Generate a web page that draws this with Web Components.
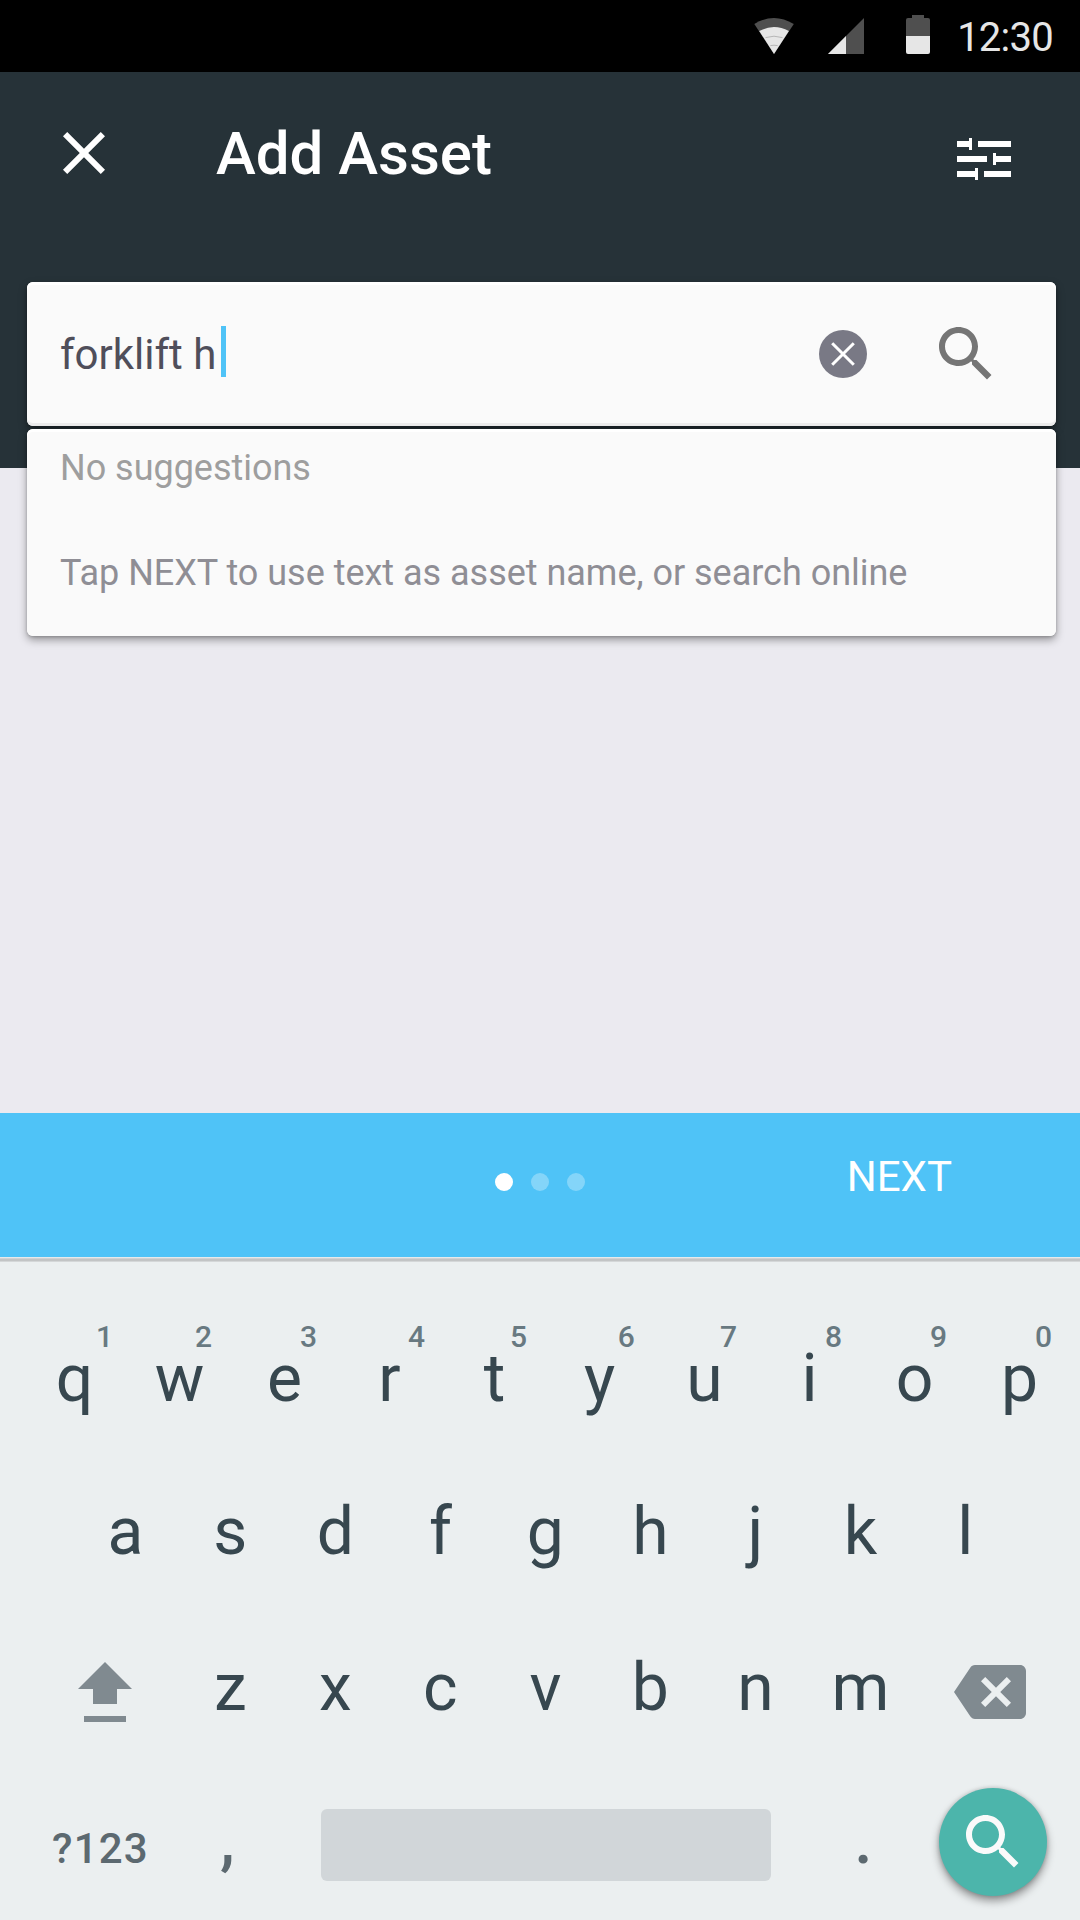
<!DOCTYPE html>
<html lang="en">
<head>
<meta charset="utf-8">
<title>Add Asset</title>
<style>
  html, body { margin: 0; padding: 0; }
  body { width: 1080px; height: 1920px; overflow: hidden; font-family: Roboto, "Noto Sans", sans-serif; background: #ebeaf0; }
</style>
</head>
<body>
<asset-screen></asset-screen>
<script>
const define = (name, markup, setup) => {
  const template = document.createElement('template');
  template.innerHTML = markup;
  customElements.define(name, class extends HTMLElement {
    constructor() {
      super();
      this.attachShadow({ mode: 'open' }).append(template.content.cloneNode(true));
    }
    connectedCallback() {
      if (setup) setup(this, this.shadowRoot);
    }
  });
};

const icons = {
  close: '<path d="M19 6.41L17.59 5 12 10.59 6.41 5 5 6.41 10.59 12 5 17.59 6.41 19 12 13.41 17.59 19 19 17.59 13.41 12z"/>',
  search: '<path d="M15.5 14h-.79l-.28-.27C15.41 12.59 16 11.11 16 9.5 16 5.91 13.09 3 9.5 3S3 5.91 3 9.5 5.91 16 9.5 16c1.61 0 3.09-.59 4.23-1.57l.27.28v.79l5 4.99L20.49 19l-4.99-5zm-6 0C7.01 14 5 11.99 5 9.5S7.01 5 9.5 5 14 7.01 14 9.5 11.99 14 9.5 14z"/>',
  tune: '<path d="M3 6h4v-1h1v4h-1v-1h-4zM10 6h11v2h-11zM3 11h10v2h-10zM15 10h1v1h5v2h-5v1h-1zM3 16h6v-1h1v4h-1v-1h-6zM12 16h9v2h-9z"/>',
  backspace: '<path d="M22 3H7c-.69 0-1.23.35-1.59.88L0 12l5.41 8.11c.36.53.9.89 1.59.89h15c1.1 0 2-.9 2-2V5c0-1.1-.9-2-2-2zm-3 12.59L17.59 17 14 13.41 10.41 17 9 15.59 12.59 12 9 8.41 10.41 7 14 10.59 17.59 7 19 8.41 15.41 12 19 15.59z"/>',
  shift: '<path d="M12 2L3 11h5v5h8v-5h5zM5 20h14v2H5z"/>',
  clear: '<circle cx="12" cy="12" r="8"/><path d="M8.4 8.4l7.2 7.2M15.6 8.4l-7.2 7.2" stroke="#fff" stroke-width="1"/>'
};

define('md-icon', `
  <style>
    :host { display: block; flex: none; width: 72px; height: 72px; }
    svg { display: block; width: 72px; height: 72px; fill: currentColor; }
  </style>
  <svg viewBox="0 0 24 24"></svg>
`, (el, root) => { root.querySelector('svg').innerHTML = icons[el.getAttribute('name')]; });

define('status-bar', `
  <style>
    :host { display: flex; box-sizing: border-box; height: 72px; background: #000; color: #e6e6e6;
      justify-content: flex-end; padding-right: 27px; }
    svg { display: block; flex: none; width: 202px; height: 72px; }
    span { width: 101px; text-align: right; font-size: 40px; letter-spacing: -.75px; line-height: 76px; white-space: nowrap; }
  </style>
  <svg viewBox="750 0 202 72">
    <path d="M754.3 24Q774 12 793.8 24L774 54z" fill="#4f4f4f"/>
    <path d="M759.2 31Q774 23.2 788.9 31L774 54z" fill="#e6e6e6"/>
    <path d="M765.5 37.6Q774 34.8 782.5 37.6M770.3 45.6Q774 44.8 777.7 45.6" fill="none" stroke="#aaa" stroke-width=".8"/>
    <path d="M828 54L864 18v36z" fill="#4f4f4f"/>
    <path d="M828 54L846 36v18z" fill="#e6e6e6"/>
    <path d="M906 36V20q0-2 2-2h4v-3h12v3h4q2 0 2 2v16z" fill="#4f4f4f"/>
    <path d="M906 36h24v16q0 2-2 2h-20q-2 0-2-2z" fill="#e6e6e6"/>
  </svg>
  <span>12:30</span>
`);

define('app-bar', `
  <style>
    :host { display: flex; height: 162px; padding: 0 60px 0 48px; align-items: center; color: #fff; }
    h1 { flex: 1; margin: 1px 0 0 96px; font-size: 60px; font-weight: 500; line-height: 72px; }
    md-icon[name=tune] { margin-top: 12px; }
  </style>
  <md-icon name="close"></md-icon>
  <h1><slot></slot></h1>
  <md-icon name="tune"></md-icon>
`);

define('raised-card', `
  <style>
    :host { display: block; box-sizing: border-box; background: #fafafa; border-radius: 6px;
      box-shadow: 0 4px 8px rgba(0,0,0,.36), 0 1px 3px rgba(0,0,0,.18), inset 0 3px 0 #fff, inset 0 -3px 0 var(--edge, #fafafa); }
  </style>
  <slot></slot>
`);

define('search-field', `
  <style>
    :host { display: flex; height: 144px; align-items: center; padding: 0 54px 0 33px; }
    .query { font-size: 42px; color: #4f4e5a; line-height: 51px; white-space: pre; margin-top: 1px; }
    .caret { width: 5px; height: 51px; background: #4fc3f7; margin: -5px auto 0 5px; }
    md-icon[name=clear] { color: #797985; margin-right: 51px; }
    md-icon[name=search] { color: #757575; }
  </style>
  <span class="query"><slot></slot></span><i class="caret"></i>
  <md-icon name="clear"></md-icon>
  <md-icon name="search"></md-icon>
`);

define('suggestion-list', `
  <style>
    :host { display: flex; flex-direction: column; box-sizing: border-box; height: 207px; padding: 12px 33px;
      font-size: 36px; letter-spacing: -.02px; gap: 51px; color: #8f8e95; line-height: 54px; white-space: nowrap; }
    ::slotted(.empty) { color: #9e9e9e; }
  </style>
  <slot></slot>
`);

define('step-bar', `
  <style>
    :host { display: grid; grid-template-columns: 1fr 90px 1fr; height: 144px; background: #4fc3f7; color: #fff; align-items: center; }
    .dots { grid-column: 2; display: flex; gap: 18px; margin-top: -6px; }
    .dots i { width: 18px; height: 18px; border-radius: 50%; background: rgba(255,255,255,.3); }
    .dots i.on { background: #fff; }
    .next { justify-self: end; margin-right: 128px; font-size: 42px; line-height: 50px; margin-top: -16px; }
  </style>
  <div class="dots"><i class="on"></i><i></i><i></i></div>
  <span class="next"><slot></slot></span>
`);

define('kb-key', `
  <style>
    :host { display: block; position: relative; flex: none; width: 105px; text-align: center; font-size: 66px; line-height: inherit; }
    .hint { position: absolute; top: 20px; left: calc(50% + var(--dx, 24px)); width: 40px; margin-left: -20px;
      font-size: 30px; line-height: 30px; font-weight: 500; color: #687981; }
  </style>
  <slot></slot>
`, (el, root) => {
  if (!el.hasAttribute('hint') || root.querySelector('.hint')) return;
  const s = document.createElement('span');
  s.className = 'hint';
  s.textContent = el.getAttribute('hint');
  s.style.setProperty('--dx', (el.getAttribute('dx') || 24) + 'px');
  root.append(s);
});

define('soft-keyboard', `
  <style>
    :host { display: block; background: #ebeff0; height: 663px; color: #37474f; overflow: hidden; }
    .rule { height: 5px; background: linear-gradient(#e6eaeb 0 1px, #d0d2d3 1px 2px, #c2c4c5 2px 4px, #d4d7d8 4px 5px); margin-bottom: 40px; }
    .row { display: flex; height: 153px; line-height: 153px; }
    .r1 { padding-left: 22px; }
    .r2 { padding-left: 72.9px; }
    .r3 { height: 159px; line-height: 159px; align-items: center; padding-left: 69px; }
    .r3 md-icon { color: #808a90; margin-top: 9px; }
    .r3 md-icon[name=shift] { margin-right: 36.9px; }
    .r3 md-icon[name=backspace] { margin-left: 41.1px; }
    .r4 { color: #5c6970; font-weight: 500; }
    .sym { width: 124px; margin-left: 52px; font-size: 42px; letter-spacing: 1.2px; line-height: 163px; }
    .comma { margin-left: -1px; font-weight: 500; }
    .comma, .dot { line-height: 147px; }
    .space { width: 450px; height: 72px; border-radius: 6px; background: #d1d6d9; margin: 42px 0 0 41px; }
    .dot { margin-left: 40px; }
    .go { display: flex; align-items: center; justify-content: center; width: 108px; height: 108px; border-radius: 50%;
      margin: 21px 0 0 23px; background: #4cb5ab; color: #fafafa; box-shadow: 0 5px 8px rgba(0,0,0,.38), 0 0 4px rgba(0,0,0,.18); }
  </style>
  <div class="rule"></div>
  <div class="row r1"></div>
  <div class="row r2"></div>
  <div class="row r3"><md-icon name="shift"></md-icon><md-icon name="backspace"></md-icon></div>
  <div class="row r4">
    <span class="sym">?123</span>
    <kb-key class="comma">,</kb-key>
    <div class="space"></div>
    <kb-key class="dot">.</kb-key>
    <div class="go"><md-icon name="search"></md-icon></div>
  </div>
`, (el, root) => {
  if (root.querySelector('.r1 kb-key')) return;
  const shifts = { '1': 30, '4': 27, '6': 26.8 };
  const key = (c, hint) => {
    const k = document.createElement('kb-key');
    k.textContent = c;
    if (hint) { k.setAttribute('hint', hint); k.setAttribute('dx', shifts[hint] || 24); }
    return k;
  };
  [...'qwertyuiop'].forEach((c, i) => root.querySelector('.r1').append(key(c, String((i + 1) % 10))));
  [...'asdfghjkl'].forEach(c => root.querySelector('.r2').append(key(c)));
  const back = root.querySelector('.r3 md-icon[name=backspace]');
  [...'zxcvbnm'].forEach(c => back.before(key(c)));
});

define('asset-screen', `
  <style>
    :host { display: flex; flex-direction: column; width: 1080px; height: 1920px; }
    main { height: 1041px; box-sizing: border-box; padding: 0 24px 0 27px;
      background: linear-gradient(#263238 396px, #ebeaf0 396px); }
    app-bar { margin: 0 -24px 48px -27px; }
    main raised-card + raised-card { margin-top: 3px; }
    .field { --edge: #ececec; }
  </style>
  <status-bar></status-bar>
  <main>
    <app-bar>Add Asset</app-bar>
    <raised-card class="field"><search-field>forklift h</search-field></raised-card>
    <raised-card><suggestion-list>
      <div class="empty">No suggestions</div>
      <div>Tap NEXT to use text as asset name, or search online</div>
    </suggestion-list></raised-card>
  </main>
  <step-bar>NEXT</step-bar>
  <soft-keyboard></soft-keyboard>
`);
</script>
</body>
</html>
